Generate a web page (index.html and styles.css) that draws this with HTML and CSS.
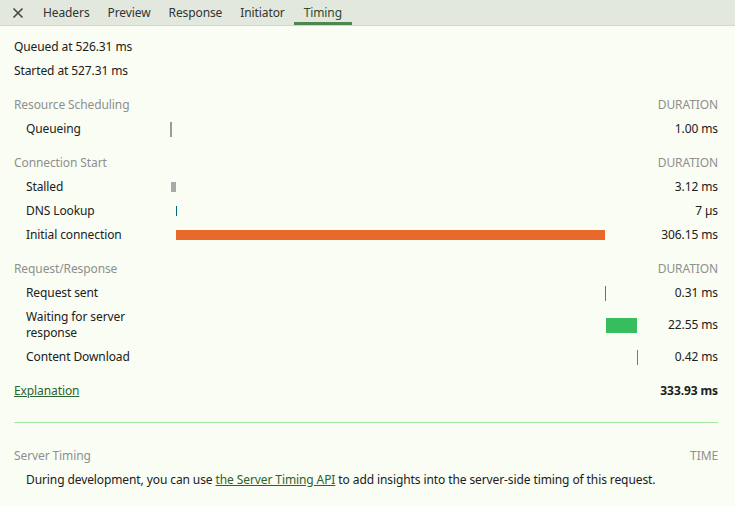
FILE: index.html
```html
<!DOCTYPE html>
<html>
<head>
<meta charset="utf-8">
<link rel="stylesheet" href="styles.css">
</head>
<body>
<div class="panel">
  <div class="tabbar">
    <button class="close" aria-label="Close">
      <svg width="12" height="12" viewBox="0 0 12 12"><path d="M1.5 1.5 L10.5 10.5 M10.5 1.5 L1.5 10.5" stroke="#474747" stroke-width="1.6" fill="none"/></svg>
    </button>
    <div class="tab">Headers</div>
    <div class="tab">Preview</div>
    <div class="tab">Response</div>
    <div class="tab">Initiator</div>
    <div class="tab active">Timing</div>
  </div>
  <div class="content">
    <div class="meta">Queued at 526.31 ms</div>
    <div class="meta">Started at 527.31 ms</div>

    <div class="table">
      <div class="section">Resource Scheduling</div><div class="section"></div><div class="section dur">DURATION</div>
      <div class="name">Queueing</div><div class="bars"><span class="bar tall queue" style="margin-left:0px;width:2px"></span></div><div class="dur">1.00 ms</div>

      <div class="section">Connection Start</div><div class="section"></div><div class="section dur">DURATION</div>
      <div class="name">Stalled</div><div class="bars"><span class="bar short stalled" style="margin-left:1px;width:5px"></span></div><div class="dur">3.12 ms</div>
      <div class="name">DNS Lookup</div><div class="bars"><span class="bar short dns" style="margin-left:6px;width:1px"></span></div><div class="dur">7 µs</div>
      <div class="name">Initial connection</div><div class="bars"><span class="bar short connect" style="margin-left:6px;width:429px"></span></div><div class="dur">306.15 ms</div>

      <div class="section">Request/Response</div><div class="section"></div><div class="section dur">DURATION</div>
      <div class="name">Request sent</div><div class="bars"><span class="bar tall sent" style="margin-left:435px;width:1px"></span></div><div class="dur">0.31 ms</div>
      <div class="name">Waiting for server response</div><div class="bars"><span class="bar tall waiting" style="margin-left:436px;width:31px"></span></div><div class="dur">22.55 ms</div>
      <div class="name">Content Download</div><div class="bars"><span class="bar tall download" style="margin-left:467px;width:1px"></span></div><div class="dur">0.42 ms</div>

      <div class="total-label"><a href="#" class="link">Explanation</a></div><div class="total-gap"></div><div class="total-label dur total">333.93 ms</div>
    </div>

    <hr class="divider">

    <div class="server-head">
      <span>Server Timing</span>
      <span>TIME</span>
    </div>
    <div class="server-text">During development, you can use <a href="#" class="link">the Server Timing API</a> to add insights into the server-side timing of this request.</div>
  </div>
</div>
</body>
</html>
```

FILE: styles.css
```css
* { box-sizing: border-box; }
html, body {
  margin: 0;
  padding: 0;
  height: 100%;
  background: #f9fdf4;
}
body {
  font-family: "Noto Sans", "Open Sans", sans-serif;
  font-size: 12px;
  letter-spacing: -0.1px;
  color: #202020;
}
.panel {
  height: 506px;
  display: flex;
  flex-direction: column;
}
.tabbar {
  height: 26px;
  display: flex;
  align-items: stretch;
  background: #e2e8dd;
  border-bottom: 1px solid #b7eab0;
}
.close {
  width: 34px;
  border: 0;
  background: transparent;
  padding: 0 0 0 2px;
  display: flex;
  align-items: center;
  justify-content: center;
  cursor: pointer;
}
.tab {
  padding: 3px 9px 0;
  display: flex;
  align-items: center;
  color: #333;
  line-height: 16px;
  border-bottom: 3px solid transparent;
}
.tab.active {
  padding: 3px 10px 0;
  color: #2f4a2f;
  border-bottom-color: #4f864f;
}
.content {
  flex: 1;
  padding: 9px 17px 0 14px;
}
.meta {
  line-height: 16px;
  padding: 4px 0;
}
.table {
  display: grid;
  grid-template-columns: 156px 470px 1fr;
}
.table > div {
  line-height: 16px;
  padding: 4px 0;
}
.section {
  color: #8f8f8f;
  margin-top: 10px;
}
.name {
  padding-left: 12px !important;
  padding-right: 20px !important;
}
.dur {
  display: flex;
  align-items: center;
  justify-content: flex-end;
  text-align: right;
}
.section.dur { color: #8f8f8f; }
.bars {
  display: flex;
  align-items: center;
}
.bar {
  display: block;
  flex: none;
}
.bar.tall { height: 15px; }
.bar.short { height: 10px; }
.queue { background: #9a9a9a; }
.stalled { background: #a9a9a9; }
.dns { background: #00687c; }
.connect { background: #e8692a; }
.sent { background: #1a8bbd; }
.waiting { background: #36bd5d; }
.download { background: #4a7fd4; }
.total-label, .total-gap { margin-top: 10px; }
.total { font-weight: bold; }
.link {
  color: #2c632c;
  text-decoration: underline;
  text-decoration-color: #2c632c;
}
.divider {
  border: 0;
  border-top: 1px solid #a9eaa0;
  margin: 19px 0 0 0;
  height: 0;
}
.server-head {
  display: flex;
  justify-content: space-between;
  color: #8f8f8f;
  line-height: 16px;
  padding: 4px 0;
  margin-top: 21px;
}
.server-text {
  padding: 4px 0 4px 12px;
  line-height: 16px;
}
```
